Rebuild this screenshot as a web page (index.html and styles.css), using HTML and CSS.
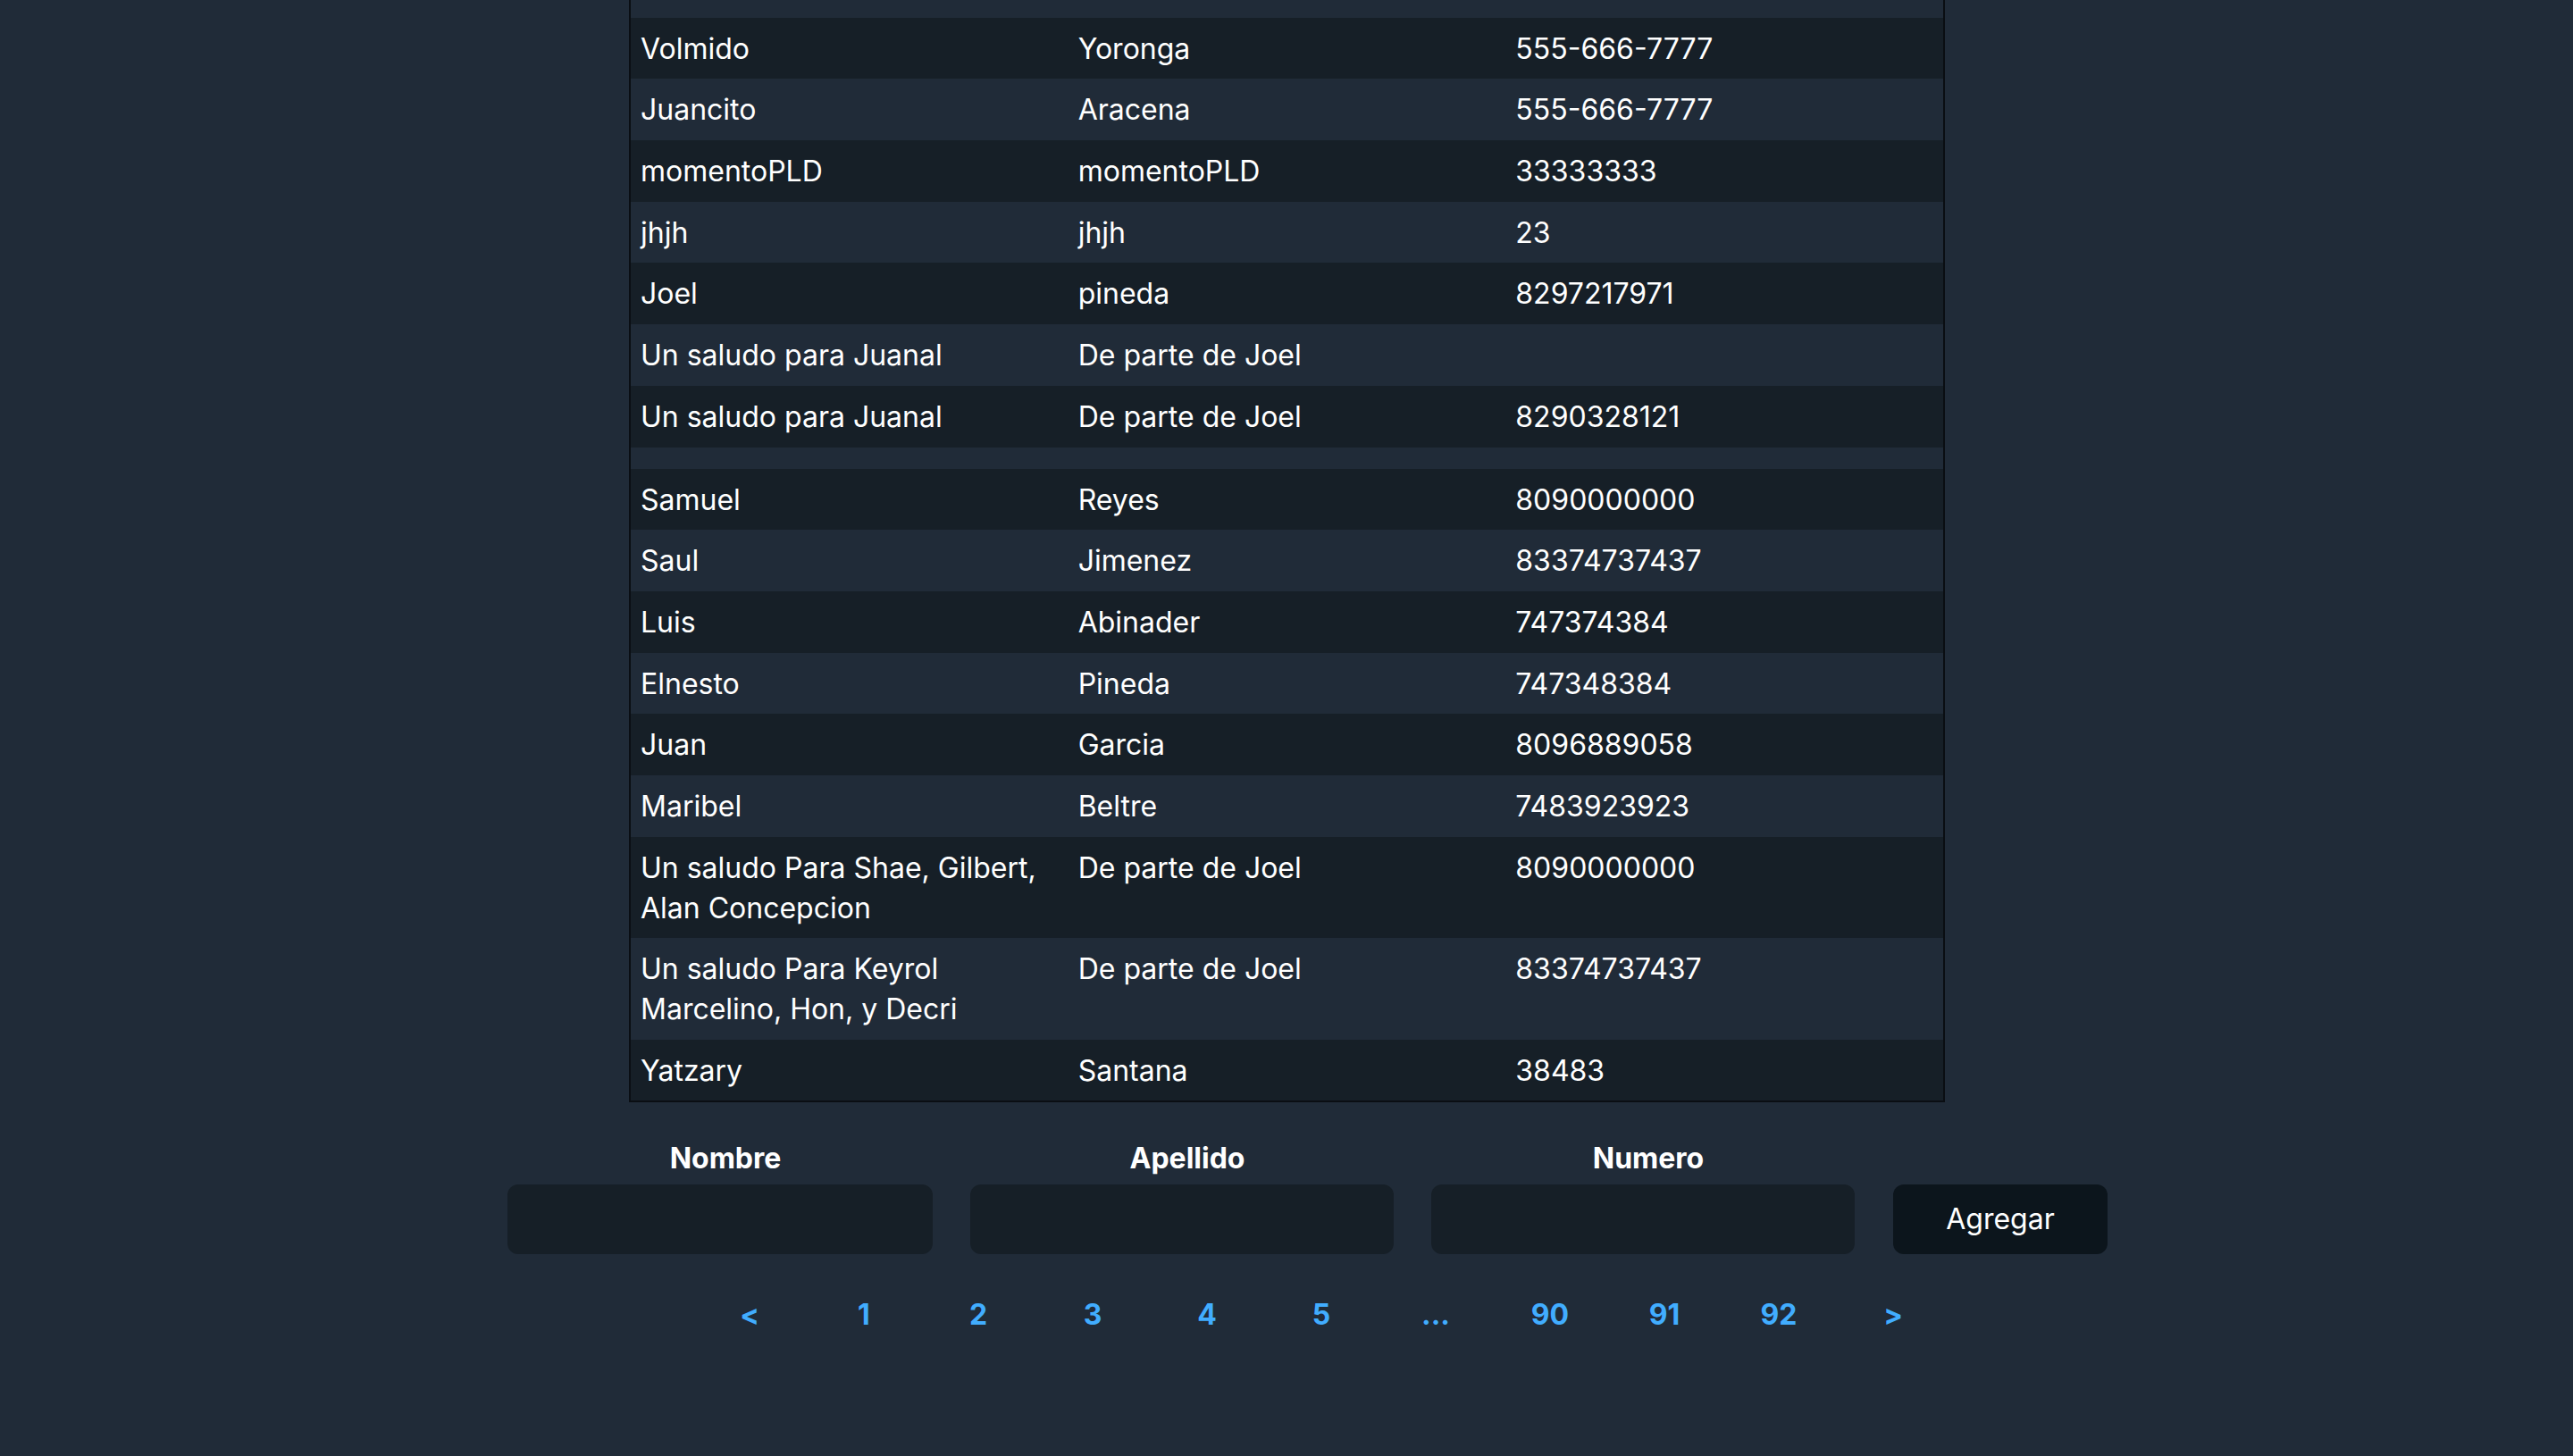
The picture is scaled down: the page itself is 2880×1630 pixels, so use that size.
FILE: index.html
```html
<!DOCTYPE html>
<html lang="es">
<head>
<meta charset="utf-8">
<title>Contactos</title>
<link rel="stylesheet" href="styles.css">
</head>
<body>
<main class="page">
  <table class="contacts">
    <colgroup><col><col><col></colgroup>
    <tbody>
      <tr class="filler"><td>&nbsp;</td><td>&nbsp;</td><td>&nbsp;</td></tr>
      <tr><td>Volmido</td><td>Yoronga</td><td>555-666-7777</td></tr>
      <tr><td>Juancito</td><td>Aracena</td><td>555-666-7777</td></tr>
      <tr><td>momentoPLD</td><td>momentoPLD</td><td>33333333</td></tr>
      <tr><td>jhjh</td><td>jhjh</td><td>23</td></tr>
      <tr><td>Joel</td><td>pineda</td><td>8297217971</td></tr>
      <tr><td>Un saludo para Juanal</td><td>De parte de Joel</td><td></td></tr>
      <tr><td>Un saludo para Juanal</td><td>De parte de Joel</td><td>8290328121</td></tr>
      <tr><td></td><td></td><td></td></tr>
      <tr><td>Samuel</td><td>Reyes</td><td>8090000000</td></tr>
      <tr><td>Saul</td><td>Jimenez</td><td>83374737437</td></tr>
      <tr><td>Luis</td><td>Abinader</td><td>747374384</td></tr>
      <tr><td>Elnesto</td><td>Pineda</td><td>747348384</td></tr>
      <tr><td>Juan</td><td>Garcia</td><td>8096889058</td></tr>
      <tr><td>Maribel</td><td>Beltre</td><td>7483923923</td></tr>
      <tr><td>Un saludo Para Shae, Gilbert, Alan Concepcion</td><td>De parte de Joel</td><td>8090000000</td></tr>
      <tr><td>Un saludo Para Keyrol Marcelino, Hon, y Decri</td><td>De parte de Joel</td><td>83374737437</td></tr>
      <tr><td>Yatzary</td><td>Santana</td><td>38483</td></tr>
    </tbody>
  </table>

  <form class="add-form">
    <div class="field field-wide">
      <label class="field-label" for="nombre">Nombre</label>
      <input class="field-input" id="nombre" type="text">
    </div>
    <div class="field">
      <label class="field-label" for="apellido">Apellido</label>
      <input class="field-input" id="apellido" type="text">
    </div>
    <div class="field">
      <label class="field-label" for="numero">Numero</label>
      <input class="field-input" id="numero" type="text">
    </div>
    <button class="add-button" type="button">Agregar</button>
  </form>

  <nav class="pager">
    <a class="pager-item" href="#">&lt;</a>
    <a class="pager-item" href="#">1</a>
    <a class="pager-item" href="#">2</a>
    <a class="pager-item" href="#">3</a>
    <a class="pager-item" href="#">4</a>
    <a class="pager-item" href="#">5</a>
    <span class="pager-item">...</span>
    <a class="pager-item" href="#">90</a>
    <a class="pager-item" href="#">91</a>
    <a class="pager-item" href="#">92</a>
    <a class="pager-item" href="#">&gt;</a>
  </nav>
</main>
</body>
</html>
```

FILE: styles.css
```css
html, body {
  margin: 0;
  padding: 0;
}

body {
  background: #202b38;
  color: #ffffff;
  font-family: Inter, "Noto Sans", "Liberation Sans", sans-serif;
  font-size: 32px;
  line-height: 44.8px;
  height: 1630px;
  overflow: hidden;
}

.page {
  display: flex;
  flex-direction: column;
}

.contacts {
  width: 1473px;
  margin-left: 704px;
  margin-top: -51.2px;
  border: 2px solid #0a0e13;
  border-spacing: 0;
  border-collapse: separate;
  table-layout: fixed;
  line-height: 44.72px;
}

.contacts td {
  padding: 13px 12px 11px 11px;
  text-align: left;
  vertical-align: top;
  word-wrap: break-word;
}

.contacts tbody tr:nth-child(even) {
  background-color: #161f27;
}

.add-form {
  display: flex;
  align-items: flex-end;
  margin-top: 41px;
  margin-left: 568px;
  gap: 30px;
}

.field {
  display: flex;
  flex-direction: column;
  align-items: center;
}

.field-label {
  font-weight: 700;
  line-height: 44.8px;
  margin-bottom: 6px;
}

.field-input {
  width: 474px;
  height: 78px;
  box-sizing: border-box;
  margin: 0 12px 0 0;
  padding: 20px;
  border: none;
  border-radius: 12px;
  background: #161f27;
  color: #fff;
  font: inherit;
  outline: none;
}

.field-wide .field-input {
  width: 476px;
}

.add-button {
  width: 240px;
  height: 78px;
  box-sizing: border-box;
  margin: 0 0 0 1px;
  padding: 0;
  border: none;
  border-radius: 12px;
  background: #0c151c;
  color: #fff;
  font: inherit;
}

.pager {
  display: flex;
  margin-top: 46px;
  margin-left: 775px;
  font-weight: 700;
}

.pager-item {
  width: 128px;
  text-align: center;
  color: #41adff;
  text-decoration: none;
}
```
